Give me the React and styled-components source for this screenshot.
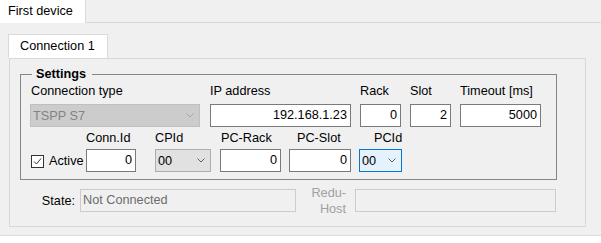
import React from 'react';
import styled, { createGlobalStyle } from 'styled-components';

const GlobalStyle = createGlobalStyle`
	html, body {
		margin: 0;
		padding: 0;
	}
	body {
		font-family: 'Liberation Sans', Arial, sans-serif;
		font-size: 12.7px;
		color: #000;
		background: #fff;
	}
`;

const Window = styled.div`
	width: 601px;
	height: 243px;
	background: #fff;
	display: flex;
	flex-direction: column;
	overflow: hidden;
`;

const TabStrip = styled.div`
	flex: none;
	height: 22px;
	background: #f0f0f0;
	border-bottom: 1px solid #d9d9d9;
	display: flex;
`;

const TopTab = styled.div`
	width: 86px;
	height: 23px;
	box-sizing: border-box;
	background: #fff;
	border-right: 1px solid #d9d9d9;
	padding-left: 8px;
	line-height: 22px;
	white-space: nowrap;
`;

const Page = styled.div`
	flex: none;
	height: 213px;
	box-sizing: border-box;
	background: #f0f0f0;
	border-bottom: 1px solid #dadada;
	padding-top: 11px;
`;

const InnerTab = styled.div`
	margin-left: 8px;
	width: 100px;
	height: 24px;
	box-sizing: border-box;
	background: #fff;
	border: 1px solid #d9d9d9;
	border-bottom: none;
	padding-left: 11px;
	line-height: 23px;
	white-space: nowrap;
`;

const Panel = styled.div`
	margin-left: 9px;
	width: 577px;
	box-sizing: border-box;
	border: 1px solid #d9d9d9;
	padding: 8px 10px 14px 10px;
`;

const GroupBox = styled.fieldset`
	margin: 0;
	width: 537px;
	box-sizing: border-box;
	min-width: 0;
	border: 1px solid #858585;
	padding: 2px 9px 7px 9px;
`;

const Legend = styled.legend`
	margin-left: 2px;
	padding: 0 6px 0 4px;
	font-weight: bold;
	line-height: 15px;
`;

const Row = styled.div`
	display: flex;
	align-items: flex-end;
	margin-top: ${({ $top }) => $top || 0}px;
`;

const Field = styled.div`
	display: flex;
	flex-direction: column;
	width: ${({ $w }) => $w}px;
	margin-left: ${({ $ml }) => $ml || 0}px;
	gap: ${({ $gap }) => $gap}px;
`;

const Label = styled.div`
	line-height: 15px;
	padding-left: ${({ $pl }) => $pl || 0}px;
	white-space: nowrap;
`;

const TextBox = styled.div`
	height: 23px;
	box-sizing: border-box;
	border: 1px solid ${({ $readonly }) => ($readonly ? '#cccccc' : '#7a7a7a')};
	background: ${({ $readonly }) => ($readonly ? '#f0f0f0' : '#fff')};
	color: ${({ $readonly }) => ($readonly ? '#6d6d6d' : '#000')};
	text-align: ${({ $align }) => $align || 'right'};
	padding: 0 3px 0 2px;
	line-height: 21px;
	white-space: nowrap;
	overflow: hidden;
	width: ${({ $w }) => ($w ? `${$w}px` : 'auto')};
`;

const comboColors = {
	disabled: { bg: '#cccccc', border: '#bfbfbf', text: '#838383', arrow: '#a6a6a6' },
	normal: { bg: '#e1e1e1', border: '#adadad', text: '#000', arrow: '#606060' },
	focused: { bg: '#e5f1fb', border: '#0078d7', text: '#000', arrow: '#606060' },
};

const Combo = styled.div`
	height: 23px;
	box-sizing: border-box;
	display: flex;
	align-items: center;
	justify-content: space-between;
	padding: 0 5px 0 2px;
	background: ${({ $v }) => comboColors[$v].bg};
	border: 1px solid ${({ $v }) => comboColors[$v].border};
	color: ${({ $v }) => comboColors[$v].text};
	svg {
		stroke: ${({ $v }) => comboColors[$v].arrow};
	}
`;

const CheckWrap = styled.div`
	width: 56px;
	height: 23px;
	display: flex;
	align-items: center;
	padding-left: 1px;
	box-sizing: border-box;
	gap: 5px;
`;

const CheckBox = styled.div`
	width: 13px;
	height: 13px;
	box-sizing: border-box;
	border: 1px solid #333;
	background: #fff;
	display: flex;
	margin-top: 2px;
`;

const StateRow = styled.div`
	display: flex;
	align-items: center;
	height: 23px;
	margin-top: 9px;
`;

const SideLabel = styled.div`
	width: ${({ $w }) => $w}px;
	margin-right: ${({ $mr }) => $mr}px;
	height: 23px;
	display: flex;
	flex-direction: column;
	justify-content: center;
	align-items: flex-end;
	line-height: 16px;
	color: ${({ $disabled }) => ($disabled ? '#a0a0a0' : '#000')};
	white-space: nowrap;
`;

const Chevron = () => (
	<svg width='8' height='5' viewBox='0 0 8 5' fill='none' strokeWidth='1'>
		<polyline points='0.5,0.5 4,4 7.5,0.5' />
	</svg>
);

const ComboBox = ({ value, variant }) => (
	<Combo $v={variant}>
		<span>{value}</span>
		<Chevron />
	</Combo>
);

export default function App() {
	return (
		<>
			<GlobalStyle />
			<Window>
				<TabStrip>
					<TopTab>First device</TopTab>
				</TabStrip>
				<Page>
					<InnerTab>Connection 1</InnerTab>
					<Panel>
						<GroupBox>
							<Legend>Settings</Legend>
							<Row>
								<Field $w={170} $gap={5}>
									<Label $pl={1}>Connection type</Label>
									<ComboBox value='TSPP S7' variant='disabled' />
								</Field>
								<Field $w={141} $ml={10} $gap={5}>
									<Label>IP address</Label>
									<TextBox>192.168.1.23</TextBox>
								</Field>
								<Field $w={41} $ml={9} $gap={5}>
									<Label>Rack</Label>
									<TextBox>0</TextBox>
								</Field>
								<Field $w={41} $ml={9} $gap={5}>
									<Label>Slot</Label>
									<TextBox>2</TextBox>
								</Field>
								<Field $w={81} $ml={9} $gap={5}>
									<Label>Timeout [ms]</Label>
									<TextBox>5000</TextBox>
								</Field>
							</Row>
							<Row $top={4}>
								<CheckWrap>
									<CheckBox>
										<svg width='11' height='11' viewBox='0 0 11 11' fill='none'>
											<polyline points='2,5.5 4.5,8 9,2.5' stroke='#333' strokeWidth='1' />
										</svg>
									</CheckBox>
									<span>Active</span>
								</CheckWrap>
								<Field $w={50} $gap={3}>
									<Label>Conn.Id</Label>
									<TextBox>0</TextBox>
								</Field>
								<Field $w={56} $ml={19} $gap={3}>
									<Label>CPId</Label>
									<ComboBox value='00' variant='normal' />
								</Field>
								<Field $w={61} $ml={9} $gap={3}>
									<Label $pl={1}>PC-Rack</Label>
									<TextBox>0</TextBox>
								</Field>
								<Field $w={62} $ml={8} $gap={3}>
									<Label $pl={8}>PC-Slot</Label>
									<TextBox>0</TextBox>
								</Field>
								<Field $w={43} $ml={8} $gap={3}>
									<Label $pl={15}>PCId</Label>
									<ComboBox value='00' variant='focused' />
								</Field>
							</Row>
						</GroupBox>
						<StateRow>
							<SideLabel $w={55} $mr={5}>State:</SideLabel>
							<TextBox $readonly $align='left' $w={216}>
								Not Connected
							</TextBox>
							<SideLabel $w={50} $mr={9} $disabled>
								<span>Redu-</span>
								<span>Host</span>
							</SideLabel>
							<TextBox $readonly $w={201} />
						</StateRow>
					</Panel>
				</Page>
			</Window>
		</>
	);
}
